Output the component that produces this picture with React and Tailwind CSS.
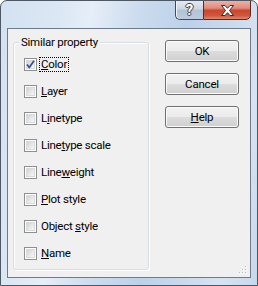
import React from "react";

const items = [
  { pre: "", key: "C", post: "olor", checked: true },
  { pre: "", key: "L", post: "ayer" },
  { pre: "L", key: "i", post: "netype" },
  { pre: "Line", key: "t", post: "ype scale" },
  { pre: "Line", key: "w", post: "eight" },
  { pre: "", key: "P", post: "lot style" },
  { pre: "Object ", key: "s", post: "tyle" },
  { pre: "", key: "N", post: "ame" },
];

const CheckBox = ({ checked }) => (
  <div className="w-[13px] h-[13px] border border-[#8e8f8f] bg-white p-px shrink-0 relative">
    <div className="w-full h-full border border-[#d9dadb] bg-[linear-gradient(135deg,#cfd2d6_0%,#e7e8ea_55%,#f6f6f6_100%)]" />
    {checked && (
      <svg className="absolute left-0 top-0" width="11" height="11" viewBox="0 0 11 11">
        <path d="M2 5.5 L4.3 8.5 L9 1.8" fill="none" stroke="#3b5299" strokeWidth="1.8" strokeLinejoin="round" />
      </svg>
    )}
  </div>
);

const Button = ({ children }) => (
  <button className="w-[74px] h-[22px] rounded-[3px] border border-[#707070] bg-[linear-gradient(#f2f2f2_0%,#ebebeb_50%,#dddddd_50%,#cfcfcf_100%)] shadow-[inset_0_0_0_1px_#fbfbfb] text-[11.5px] tracking-[-0.2px] leading-[18px] text-black">
    {children}
  </button>
);

export default function App() {
  return (
    <div
      className="w-[258px] h-[286px] rounded-t-[7px] border border-[#4d5864] flex flex-col bg-[linear-gradient(100deg,#d3e1f1_0%,#dbe7f4_20%,#e6eef8_30%,#cddcee_45%,#bcd1e9_62%,#c9d9ec_75%,#d6e3f2_88%,#c7d8ec_100%)] overflow-hidden"
      style={{ fontFamily: 'Roboto, "Open Sans", sans-serif' }}
    >
      {/* title bar */}
      <div className="h-[27px] flex justify-end items-start pr-[6px] shrink-0">
        <div className="flex -mt-px">
          <div className="w-[28px] h-[20px] rounded-bl-[5px] border border-[#3f4b5b] border-r-0 bg-[linear-gradient(#e3e9f1_0%,#ccd7e4_45%,#b3c2d4_50%,#bccbdd_100%)] shadow-[inset_1px_0_0_#f2f6fa] flex items-center justify-center">
            <span className="text-[15px] font-bold leading-none text-white [text-shadow:-1px_0_0_#3b4350,1px_0_0_#3b4350,0_-1px_0_#3b4350,0_1px_0_#3b4350]">
              ?
            </span>
          </div>
          <div className="w-[48px] h-[20px] rounded-br-[5px] border border-[#5a2a24] bg-[linear-gradient(#eeb1a6_0%,#df8a7a_40%,#c9462f_52%,#d0563c_80%,#e0876a_100%)] flex items-center justify-center">
            <svg width="15" height="13" viewBox="0 0 15 13">
              <path
                d="M1.5 1.5 H5 L7.5 4.3 L10 1.5 H13.5 L9.5 6.5 L13.5 11.5 H10 L7.5 8.7 L5 11.5 H1.5 L5.5 6.5 Z"
                fill="#fff"
                stroke="#3b2a28"
                strokeWidth="1"
                strokeLinejoin="round"
              />
            </svg>
          </div>
        </div>
      </div>

      {/* client area */}
      <div className="mx-[6px] border border-[#6d7b8b] bg-[#f0f0f0] h-[250px] flex relative">
        <div className="relative ml-[5px] mt-[13px] w-[136px] h-[228px] border border-[#d5dfe5] rounded-[3px] shadow-[inset_1px_1px_0_#fff,1px_1px_0_#fff]">
          <span className="absolute left-[5px] -top-[9px] px-[2px] bg-[#f0f0f0] text-[11.5px] tracking-[-0.25px] leading-[16px] text-black">
            Similar property
          </span>
          <div className="flex flex-col gap-[14px] pl-[10px] pt-[15px]">
            {items.map((it, i) => (
              <div key={i} className="h-[13px] flex items-center gap-[2px]">
                <CheckBox checked={it.checked} />
                <span
                  className={`text-[11.5px] tracking-[-0.25px] leading-[13px] text-black px-px ${
                    it.checked ? "border border-dotted border-black" : "border border-transparent"
                  }`}
                >
                  {it.pre}
                  <u className="underline-offset-[1px]">{it.key}</u>
                  {it.post}
                </span>
              </div>
            ))}
          </div>
        </div>

        <div className="ml-[16px] mt-[11px] flex flex-col gap-[11px]">
          <Button>OK</Button>
          <Button>Cancel</Button>
          <Button>
            <u>H</u>elp
          </Button>
        </div>

        {/* size grip */}
        <svg className="absolute right-[2px] bottom-[2px]" width="10" height="10" viewBox="0 0 10 10">
          {[
            [7, 1],
            [4, 4],
            [7, 4],
            [1, 7],
            [4, 7],
            [7, 7],
          ].map(([x, y], i) => (
            <g key={i}>
              <rect x={x + 1} y={y + 1} width="1" height="1" fill="#fff" />
              <rect x={x} y={y} width="1" height="1" fill="#b8bfc7" />
            </g>
          ))}
        </svg>
      </div>
    </div>
  );
}
